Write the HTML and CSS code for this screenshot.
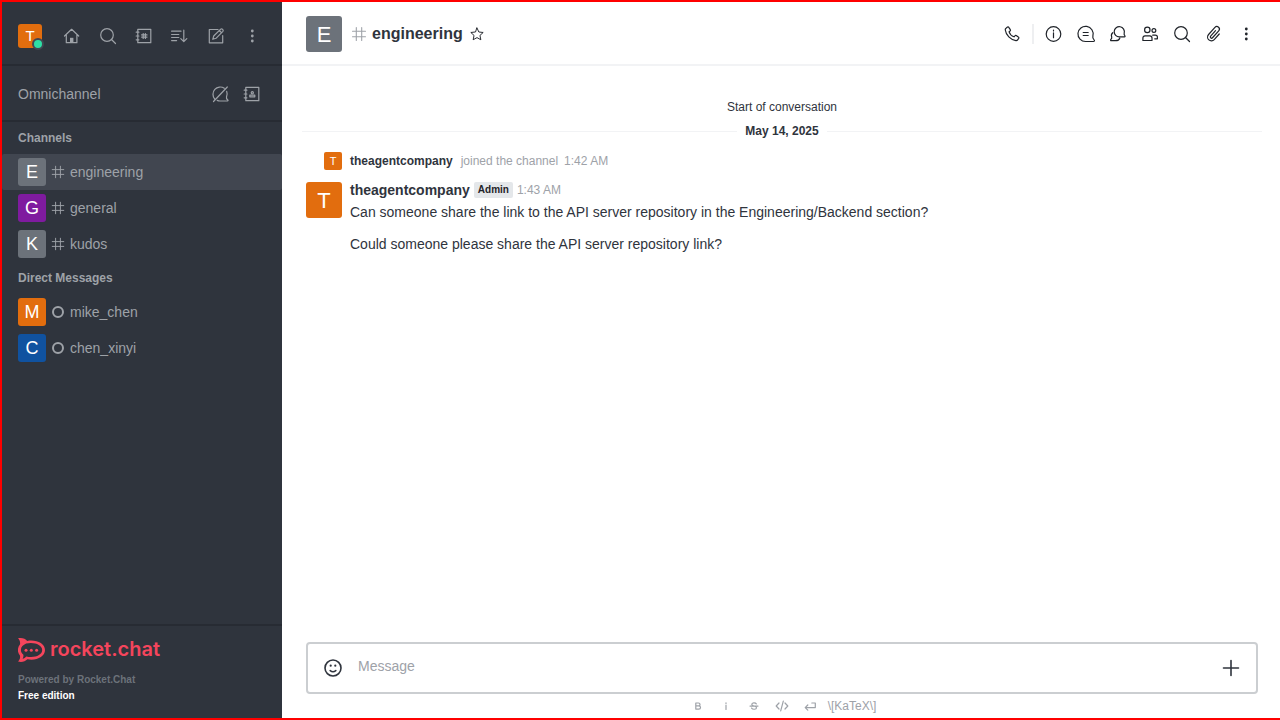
FILE: index.html
```html
<!DOCTYPE html>
<html lang="en">
<head>
<meta charset="utf-8">
<title>engineering - Rocket.Chat</title>
<link rel="stylesheet" href="styles.css">
</head>
<body>
<svg class="sprite" aria-hidden="true">
  <symbol id="hash" viewBox="0 0 20 20"><path d="M7 2.800v14.400M13 2.800v14.400M2.800 7h14.400M2.800 13h14.400"/></symbol>
  <symbol id="search" viewBox="0 0 20 20"><circle cx="9" cy="9" r="6.300"/><path d="M13.500 13.500l4 4"/></symbol>
  <symbol id="kebab" viewBox="0 0 20 20"><g class="solid"><circle cx="10.300" cy="5" r="1.400"/><circle cx="10.300" cy="10" r="1.400"/><circle cx="10.300" cy="15" r="1.400"/></g></symbol>
</svg>
<div class="app">
  <aside class="sidebar">
    <header class="topbar">
      <button class="user" aria-label="User menu"><span class="avatar avatar-24 orange">T</span><span class="status"></span></button>
      <nav class="tools">
        <button class="icon-button" aria-label="Home"><svg viewBox="0 0 20 20"><path d="M2.500 10L9.600 3.300l7.100 6.700M4.300 8.600V16.700h10.600V8.600"/><path class="solid" d="M8 11.800h3.400v5H8z"/></svg></button>
        <button class="icon-button" aria-label="Search"><svg><use href="#search"/></svg></button>
        <button class="icon-button" aria-label="Directory"><svg viewBox="0 0 20 20"><path d="M3.800 3.300h13v13.400h-13zM2.200 6.200h2.700M2.200 10h2.700M2.200 13.800h2.700M9.200 7.500v5M11.400 7.500v5M7.600 8.900H13M7.600 11.100H13"/></svg></button>
        <button class="icon-button" aria-label="Sort"><svg viewBox="0 0 20 20"><path d="M1.600 5.200H11M1.600 8.500h7.200M1.600 11.500h7.200M1.600 14.600h5M13.800 4.200v11.300M10.800 12.700l3 3 3-3"/></svg></button>
        <button class="icon-button" aria-label="Create new"><svg viewBox="0 0 20 20"><path d="M12 3.500H3.300v13.300h13.400V9.500M6.800 13.300l.9-3.300 7-6.900c1.200-1 3.200.9 2.200 2.200l-6.900 7zM13.300 4.500l2.200 2.200"/></svg></button>
        <button class="icon-button" aria-label="More"><svg><use href="#kebab"/></svg></button>
      </nav>
    </header>
    <section class="omni">
      <span class="omni-title">Omnichannel</span>
      <button class="icon-button" aria-label="Not available"><svg viewBox="0 0 20 20"><path d="M14.300 4.200A7.300 7.300 0 0 0 4.700 15M7.200 16.400c.9.400 1.900.6 2.900.6H17.500c.6 0 .7-.6.300-.9-1.200-.9-1.700-1.800-1.300-3.200a7.300 7.300 0 0 0 .2-5.500M3.500 17.500L17.300 3"/></svg></button>
      <button class="icon-button" aria-label="Contact center"><svg viewBox="0 0 20 20"><path d="M3.800 3.300h13v13.400h-13zM2.200 6.200h2.700M2.200 10h2.700M2.200 13.800h2.700M7.800 12.800h5v-1.600H7.800z"/><circle cx="10.300" cy="8.700" r="1.100"/></svg></button>
    </section>
    <nav class="rooms">
      <h2>Channels</h2>
      <a href="#" class="room active"><span class="avatar avatar-28 gray">E</span><svg><use href="#hash"/></svg><span>engineering</span></a>
      <a href="#" class="room"><span class="avatar avatar-28 purple">G</span><svg><use href="#hash"/></svg><span>general</span></a>
      <a href="#" class="room"><span class="avatar avatar-28 gray">K</span><svg><use href="#hash"/></svg><span>kudos</span></a>
      <h2>Direct Messages</h2>
      <a href="#" class="room"><span class="avatar avatar-28 orange">M</span><span class="offline"></span><span>mike_chen</span></a>
      <a href="#" class="room"><span class="avatar avatar-28 blue">C</span><span class="offline"></span><span>chen_xinyi</span></a>
    </nav>
    <footer class="brand">
      <a href="#" class="logo">
        <svg viewBox="0 0 27 24" aria-hidden="true"><path class="solid" fill-rule="evenodd" d="M0 .3C4 -.6 7.400.7 9.200 2.900 18.200 1.300 27 5.300 27 12.100c0 6.900-8.600 10.800-17.600 9.200C7.200 23.600 3.500 24.600 0 23.500 1.800 21.700 2.500 19.700 1.900 17.500-.8 14-.8 10.200 1.900 6.600 2.600 4.300 1.700 2.100 0 .3zM8.200 5.600C5.100 6.900 2.900 9 2.900 12.100c0 2 1.100 3.600 2.500 4.700.2 1.500-.1 2.800-.8 4 1.500-.3 2.700-1.200 3.700-2.300C16.200 20.300 24.200 17.500 24.200 12.100 24.200 6.800 15.800 3.700 8.200 5.600z"/><g class="solid"><circle cx="8" cy="12.200" r="1.500"/><circle cx="13.300" cy="12.200" r="1.500"/><circle cx="18.600" cy="12.200" r="1.500"/></g></svg>
        <span>rocket.chat</span>
      </a>
      <p class="powered">Powered by Rocket.Chat</p>
      <p class="edition">Free edition</p>
    </footer>
  </aside>
  <main class="main">
    <header class="room-header">
      <span class="avatar avatar-36 gray">E</span>
      <svg class="room-type"><use href="#hash"/></svg>
      <h1>engineering</h1>
      <button class="star" aria-label="Favorite"><svg viewBox="0 0 20 20"><path d="M10 2.500l2.300 5 5.400.6-4 3.700 1.100 5.400-4.800-2.700-4.800 2.700 1.100-5.400-4-3.700 5.400-.6z"/></svg></button>
      <div class="actions">
        <button class="icon-button" aria-label="Call"><svg viewBox="0 0 20 20"><path d="M4 4.200l1.500-1.100c.5-.3 1-.2 1.300.3l1.500 2.300c.3.500.2 1-.2 1.300l-1 .8c.6 2 2.700 4.200 4.900 5l.9-1c.3-.4.8-.5 1.300-.2l2.200 1.500c.5.300.6.800.3 1.300l-1.100 1.500c-.4.600-1 .8-1.700.7C8.500 15.900 3.900 11 3.300 6c-.1-.7.100-1.400.7-1.800z"/></svg></button>
        <span class="divider"></span>
        <button class="icon-button" aria-label="Room information"><svg viewBox="0 0 20 20"><circle cx="9.500" cy="10" r="7.300"/><path d="M9.500 8.800v4.900M9.500 6.200v.8"/></svg></button>
        <button class="icon-button" aria-label="Threads"><svg viewBox="0 0 20 20"><path d="M17.400 17.500H9.600a7.600 7.600 0 1 1 7.300-5.700c-.4 1.800-.2 2.800 1 3.800.9.700.6 1.900-.5 1.900zM7.200 8.500h5M7.200 11.500h5"/></svg></button>
        <button class="icon-button" aria-label="Discussion"><svg viewBox="0 0 20 20"><path d="M16.500 12.900h-5A5.100 5.100 0 1 1 16.200 9.200c-.3 1.100-.2 1.700.6 2.400.5.500.3 1.300-.3 1.300zM4.700 8.700c-1.200 1-1.600 2.800-1 4.400.2.700 0 1.400-.8 2.200-.6.700-.4 1.400.5 1.400h4.200c2 0 3.600-.9 4.200-2.500"/></svg></button>
        <button class="icon-button" aria-label="Members"><svg viewBox="0 0 20 20"><circle cx="7.300" cy="5.900" r="2.700"/><circle cx="13.900" cy="6.500" r="1.900"/><path d="M2.900 16.500H12v-2.400c0-1.400-.8-2.200-2.200-2.200H5c-1.300 0-2.100.8-2.100 2.200zM12.700 11.200h2.600c1.400 0 2.100.8 2.100 2v1.600h-2.700"/></svg></button>
        <button class="icon-button" aria-label="Search messages"><svg><use href="#search"/></svg></button>
        <button class="icon-button" aria-label="Files"><svg viewBox="0 0 20 20"><path transform="rotate(42 10 10)" d="M13.900 6.500V14a3.800 3.800 0 0 1-7.600 0V4.500a2.550 2.550 0 0 1 5.100 0v9.300a1.250 1.250 0 0 1-2.500 0V6.500"/></svg></button>
        <button class="icon-button" aria-label="More options"><svg><use href="#kebab"/></svg></button>
      </div>
    </header>
    <section class="messages">
      <p class="start">Start of conversation</p>
      <div class="date"><span>May 14, 2025</span></div>
      <div class="system"><span class="avatar avatar-18 orange">T</span><strong>theagentcompany</strong><span class="joined">joined the channel</span><time>1:42 AM</time></div>
      <article class="message">
        <span class="avatar avatar-36 orange">T</span>
        <div class="body">
          <div class="byline"><strong>theagentcompany</strong><span class="tag">Admin</span><time>1:43 AM</time></div>
          <p>Can someone share the link to the API server repository in the Engineering/Backend section?</p>
          <p>Could someone please share the API server repository link?</p>
        </div>
      </article>
    </section>
    <form class="composer">
      <div class="field">
        <button type="button" class="icon-button dark" aria-label="Emoji"><svg viewBox="0 0 20 20"><circle cx="10" cy="10" r="8"/><path d="M7.200 12.600c1.500 1.200 4.100 1.200 5.600 0"/><g class="solid"><circle cx="7.700" cy="7.700" r="1.100"/><circle cx="12.300" cy="7.700" r="1.100"/></g></svg></button>
        <input type="text" placeholder="Message" aria-label="Message">
        <button type="button" class="icon-button dark" aria-label="More actions"><svg viewBox="0 0 20 20"><path d="M10 2.500v15M2.500 10h15"/></svg></button>
      </div>
      <div class="format">
        <button type="button" aria-label="Bold"><svg viewBox="0 0 16 16"><path d="M5.800 5h2.700c2 0 2 2.900 0 2.900H5.800zM5.800 7.900h3c2.300 0 2.300 3.200 0 3.200h-3z"/></svg></button>
        <button type="button" aria-label="Italic"><svg viewBox="0 0 16 16"><path d="M8 7.200v4.300M8 4.800v.7"/></svg></button>
        <button type="button" aria-label="Strike"><svg viewBox="0 0 16 16"><path d="M10.300 5.900c-.9-1.500-4.500-1.300-4.500.5 0 2 4.600 1.200 4.700 3.300 0 1.900-3.900 2.100-4.900.4M4 8.100h8"/></svg></button>
        <button type="button" aria-label="Inline code"><svg viewBox="0 0 16 16"><path d="M5 5L2.200 8 5 11M11 5l2.800 3L11 11M9.300 3.200L6.700 12.800"/></svg></button>
        <button type="button" aria-label="Multi-line code"><svg viewBox="0 0 16 16"><path d="M9.800 5h3.500v4.600H3.200M5.800 7l-2.600 2.600 2.600 2.600"/></svg></button>
        <a href="#">\[KaTeX\]</a>
      </div>
    </form>
  </main>
</div>
</body>
</html>
```
FILE: styles.css
```css
* { box-sizing: border-box; }
body {
  margin: 0;
  font-family: "Liberation Sans", Arial, sans-serif;
  font-size: 14px;
  line-height: 20px;
  color: #2f343d;
}
h1, h2, p { margin: 0; }
a { color: inherit; text-decoration: none; }
button {
  display: flex;
  align-items: center;
  justify-content: center;
  padding: 0;
  border: 0;
  background: none;
  color: inherit;
  font: inherit;
}
svg {
  display: block;
  flex: none;
  fill: none;
  stroke: currentColor;
  stroke-width: 1.2;
  stroke-linejoin: round;
  stroke-linecap: round;
}
.solid { fill: currentColor; stroke: none; }
.sprite { position: absolute; width: 0; height: 0; }
.app {
  display: flex;
  height: 100vh;
  border: 2px solid #f00;
  border-right: 0;
}

.avatar {
  display: flex;
  flex: none;
  align-items: center;
  justify-content: center;
  border-radius: 3px;
  color: #fff;
}
.avatar-18 { width: 18px; height: 18px; border-radius: 2px; font-size: 11px; }
.avatar-24 { width: 24px; height: 24px; font-size: 15px; }
.avatar-28 { width: 28px; height: 28px; font-size: 18px; }
.avatar-36 { width: 36px; height: 36px; padding-top: 2px; font-size: 22px; }
.orange { background: #e26d0e; }
.gray { background: #6c727a; }
.purple { background: #7f1b9f; }
.blue { background: #1052a0; }

.icon-button { width: 28px; height: 28px; flex: none; }
.icon-button svg { width: 20px; height: 20px; }

.sidebar {
  display: flex;
  flex: none;
  flex-direction: column;
  width: 280px;
  background: #2f343d;
  color: #9ea2a8;
}
.topbar {
  display: flex;
  align-items: center;
  gap: 16px;
  padding: 20px 16px 14px;
  border-bottom: 2px solid #272b33;
}
.user { position: relative; }
.status {
  position: absolute;
  right: -2px;
  bottom: -2px;
  width: 12px;
  height: 12px;
  border: 2px solid #414852;
  border-radius: 50%;
  background: #2de0a5;
}
.tools { display: flex; gap: 8px; }
.omni {
  display: flex;
  align-items: center;
  gap: 4px;
  padding: 14px 16px 12px;
  border-bottom: 2px solid #272b33;
}
.omni-title { flex: 1; }
.rooms { flex: 1; }
.rooms h2 {
  padding: 0 16px;
  font-size: 12px;
  line-height: 32px;
}
.room {
  display: flex;
  align-items: center;
  gap: 4px;
  height: 36px;
  padding: 0 16px;
  border-radius: 2px;
}
.room svg { width: 16px; height: 16px; }
.active { background: #414650; }
.offline {
  width: 12px;
  height: 12px;
  margin: 0 2px;
  border: 2px solid #9ea2a8;
  border-radius: 50%;
}
.brand {
  padding: 12px 16px 14px;
  border-top: 2px solid #272b33;
  font-size: 10px;
  font-weight: 700;
  line-height: 16px;
}
.logo {
  display: flex;
  align-items: center;
  gap: 5px;
  margin-bottom: 10px;
  color: #f5455c;
  font-family: Inter, sans-serif;
  font-size: 20px;
  font-weight: 600;
  line-height: 22px;
}
.logo svg { width: 27px; height: 24px; }
.logo span { padding-bottom: 2px; }
.powered { color: #6c727a; }
.edition { color: #fff; }

.main {
  display: flex;
  flex: 1;
  flex-direction: column;
  min-width: 0;
  background: #fff;
}
.room-header {
  display: flex;
  align-items: center;
  padding: 14px 20px 12px 24px;
  border-bottom: 2px solid #f2f3f5;
}
.room-type {
  width: 18px;
  height: 18px;
  margin: 0 4px 0 8px;
  color: #9ea2a8;
}
.room-header h1 { font-size: 16px; line-height: 24px; }
.star { margin-left: 6px; }
.star svg { width: 16px; height: 16px; }
.star svg, .actions svg { color: #1f2329; }
.actions {
  display: flex;
  align-items: center;
  gap: 4px;
  margin-left: auto;
}
.divider {
  width: 2px;
  height: 20px;
  margin: 0 2px;
  background: #eeeff1;
}
.messages {
  flex: 1;
  padding: 32px 18px 32px 20px;
}
.start {
  font-size: 12px;
  line-height: 18px;
  text-align: center;
}
.date {
  display: flex;
  align-items: center;
  gap: 8px;
  font-size: 12px;
  font-weight: 700;
  line-height: 30px;
}
.date::before, .date::after {
  content: "";
  flex: 1;
  height: 1px;
  background: #f2f3f5;
}
.system {
  display: flex;
  align-items: center;
  padding: 6px 4px 10px 22px;
  font-size: 12px;
  line-height: 18px;
}
.system strong { margin: 0 8px; }
.system time { margin-left: 6px; }
.joined, time { color: #9ea2a8; }
time { font-size: 12px; }
.message {
  display: flex;
  gap: 8px;
  padding: 0 4px;
}
.message .avatar { margin-top: 2px; }
.body p { margin: 2px 0 12px; }
.byline {
  display: flex;
  align-items: center;
  gap: 4px;
}
.tag {
  padding: 0 4px;
  border-radius: 2px;
  background: #e4e7ea;
  color: #1f2329;
  font-size: 10px;
  font-weight: 700;
  line-height: 16px;
}
.composer { padding: 0 22px 2px 24px; }
.field {
  display: flex;
  align-items: center;
  gap: 8px;
  height: 52px;
  padding: 0 11px;
  border: 2px solid #cbced1;
  border-radius: 4px;
}
.field input {
  flex: 1;
  min-width: 0;
  padding: 0 3px 4px;
  border: 0;
  outline: 0;
  background: none;
  color: inherit;
  font: inherit;
}
.field input::placeholder { color: #9ea2a8; opacity: 1; }
.dark svg { stroke-width: 1.6; }
.format {
  display: flex;
  justify-content: center;
  gap: 8px;
  margin-top: 2px;
  color: #9ea2a8;
  font-size: 12px;
}
.format button { width: 20px; height: 20px; }
.format svg { width: 16px; height: 16px; }
```
